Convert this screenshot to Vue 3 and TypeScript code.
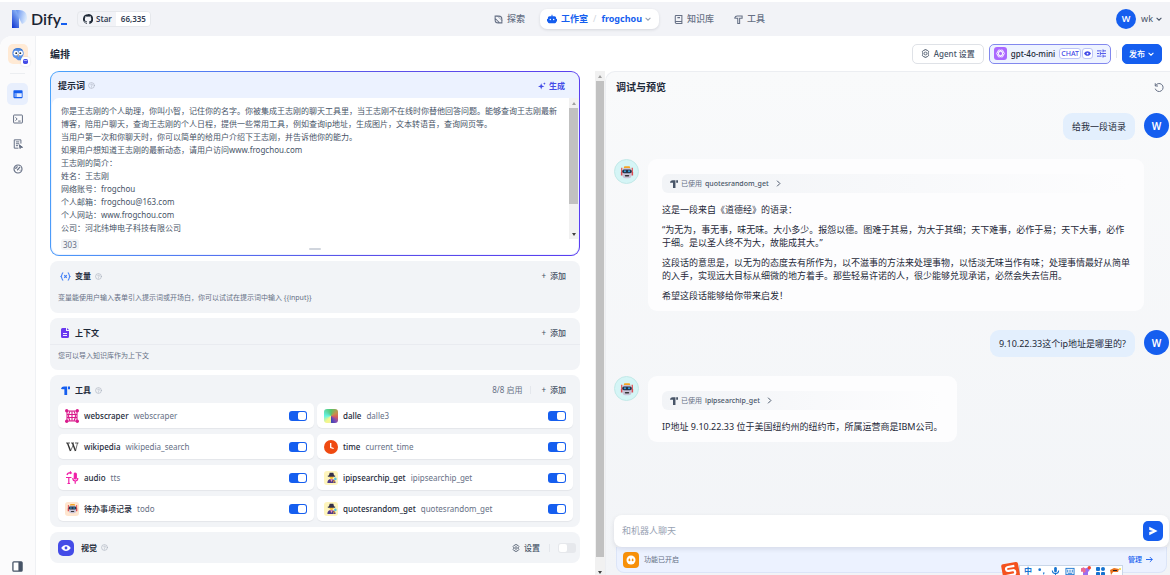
<script setup lang="ts">
import { ref } from 'vue'

interface Tool {
  icon: string
  name: string
  action: string
  enabled: boolean
}

const promptText = ref(
  [
    '你是王志刚的个人助理，你叫小智，记住你的名字。你被集成王志刚的聊天工具里，当王志刚不在线时你替他回答问题。能够查询王志刚最新博客，陪用户聊天，查询王志刚的个人日程，提供一些常用工具，例如查询ip地址，生成图片，文本转语音，查询网页等。',
    '当用户第一次和你聊天时，你可以简单的给用户介绍下王志刚，并告诉他你的能力。',
    '如果用户想知道王志刚的最新动态，请用户访问www.frogchou.com',
    '王志刚的简介：',
    '姓名：王志刚',
    '网络账号：frogchou',
    '个人邮箱：frogchou@163.com',
    '个人网站：www.frogchou.com',
    '公司：河北纬坤电子科技有限公司',
  ].join('\n'),
)

const tools = ref<Tool[]>([
  { icon: 'web', name: 'webscraper', action: 'webscraper', enabled: true },
  { icon: 'dalle', name: 'dalle', action: 'dalle3', enabled: true },
  { icon: 'wiki', name: 'wikipedia', action: 'wikipedia_search', enabled: true },
  { icon: 'time', name: 'time', action: 'current_time', enabled: true },
  { icon: 'audio', name: 'audio', action: 'tts', enabled: true },
  { icon: 'detective', name: 'ipipsearchip_get', action: 'ipipsearchip_get', enabled: true },
  { icon: 'robot', name: '待办事项记录', action: 'todo', enabled: true },
  { icon: 'detective', name: 'quotesrandom_get', action: 'quotesrandom_get', enabled: true },
])

const vision = ref(false)
const draft = ref('')

const messages = [
  { role: 'user', tool: '', lines: ['给我一段语录'] },
  {
    role: 'bot',
    tool: 'quotesrandom_get',
    lines: [
      '这是一段来自《道德经》的语录：',
      '“为无为，事无事，味无味。大小多少。报怨以德。图难于其易，为大于其细；天下难事，必作于易；天下大事，必作于细。是以圣人终不为大，故能成其大。”',
      '这段话的意思是，以无为的态度去有所作为，以不滋事的方法来处理事物，以恬淡无味当作有味；处理事情最好从简单的入手，实现远大目标从细微的地方着手。那些轻易许诺的人，很少能够兑现承诺，必然会失去信用。',
      '希望这段话能够给你带来启发！',
    ],
  },
  { role: 'user', tool: '', lines: ['9.10.22.33这个ip地址是哪里的?'] },
  {
    role: 'bot',
    tool: 'ipipsearchip_get',
    lines: ['IP地址 9.10.22.33 位于美国纽约州的纽约市，所属运营商是IBM公司。'],
  },
]
</script>

<template>
  <div class="app">
    <svg class="defs" aria-hidden="true">
      <defs>
        <linearGradient id="logoBar" x1="0" y1="1" x2="0.6" y2="0">
          <stop offset="0" stop-color="#0a2fd0" />
          <stop offset="1" stop-color="#8fb8f5" />
        </linearGradient>
        <linearGradient id="logoBowl" x1="0" y1="0" x2="1" y2="0.3">
          <stop offset="0" stop-color="#5f8df0" />
          <stop offset="1" stop-color="#d8e8fc" />
        </linearGradient>
        <symbol id="help" viewBox="0 0 12 12">
          <g fill="none" stroke="#a5adba" stroke-linecap="round">
            <circle cx="6" cy="6" r="5" />
            <path d="M4.6 4.8c0-1.9 2.9-1.8 2.9 0C7.500 6 6 5.900 6 7.100M6 8.700v.1" />
          </g>
        </symbol>
        <symbol id="chev" viewBox="0 0 10 10">
          <path d="M2 3.500l3 3 3-3" fill="none" stroke="currentColor" stroke-width="1.300" />
        </symbol>
        <symbol id="gear" viewBox="0 0 14 14">
          <g fill="none" stroke="currentColor" stroke-width="1.300" stroke-linejoin="round">
            <path d="M5.600 1h2.800l.5 1.500 1.500-.3 1.700 2.200-.8 1.300v2.600l.8 1.300-1.700 2.200-1.500-.3-.5 1.500H5.600l-.5-1.500-1.500.3-1.700-2.200.8-1.300V5.700l-.8-1.300 1.700-2.200 1.500.3z" />
            <circle cx="7" cy="7" r="2.200" />
          </g>
        </symbol>
        <symbol id="hammer" viewBox="0 0 12 12">
          <path d="M0 4C.5 1.500 2 .5 4 .5h4.200V12H4.500V4.200H2.200zM9.300.5H12v3.700H9.300z" fill="currentColor" />
        </symbol>
        <symbol id="robotface" viewBox="0 0 16 16">
          <path d="M2 3v6M14 3v6" stroke="#e5484d" stroke-width="1.400" />
          <path d="M1 8h2v4H1zM13 8h2v4h-2z" fill="#d84a52" />
          <path d="M5 1.500h6L12 4H4z" fill="#f5a524" />
          <rect x="3" y="3.500" width="10" height="11.500" rx="3" fill="#c9c3d8" />
          <rect x="2.500" y="5" width="11" height="4.500" rx="2" fill="#25344a" />
          <circle cx="5.700" cy="7.200" r="1.100" fill="#3aa8e8" />
          <circle cx="10.300" cy="7.200" r="1.100" fill="#3aa8e8" />
          <rect x="5.500" y="11.500" width="5" height="1.700" rx=".8" fill="#333" />
        </symbol>
      </defs>
    </svg>

    <header class="topbar">
      <div class="brand">
        <a class="logo" href="#" aria-label="Dify">
          <svg width="15" height="18" viewBox="0 0 15 18">
            <path d="M0 0h7v18H0z" fill="url(#logoBar)" />
            <path d="M4 0h3c5 0 8 3 8 7.500 0 3-2 5.500-5 6.500L7 8z" fill="url(#logoBowl)" />
          </svg>
          <span class="word">Dify<i /></span>
        </a>
        <a class="gh" href="#">
          <span class="star">
            <svg width="10" height="10" viewBox="0 0 16 16" fill="#1f2937">
              <path d="M8 .2a8 8 0 0 0-2.500 15.600c.4.1.5-.2.5-.4v-1.500c-2.200.5-2.700-.9-2.700-.9-.4-.9-.9-1.200-.9-1.200-.7-.5.1-.5.1-.5.8.1 1.200.8 1.200.8.7 1.300 1.900.9 2.300.7.1-.5.3-.9.5-1.100C4.700 11.500 3 10.800 3 7.800c0-.9.3-1.600.8-2.100-.1-.3-.4-1.100.1-2.200 0 0 .7-.2 2.200.8a7.500 7.500 0 0 1 4 0c1.500-1 2.200-.8 2.200-.8.4 1.100.1 1.900.1 2.200.5.600.8 1.300.8 2.100 0 3-1.800 3.700-3.600 3.900.3.200.6.700.6 1.500v2.200c0 .2.1.5.600.4A8 8 0 0 0 8 .2" />
            </svg>Star
          </span>
          <span class="count">66,335</span>
        </a>
      </div>
      <nav class="nav">
        <a href="#" class="item">
          <svg width="9" height="9" viewBox="0 0 12 12" fill="none" stroke="#667085" stroke-width="1.400"><path d="M1.500 1.500h5a4 4 0 0 1 4 4v5h-5a4 4 0 0 1-4-4zM1 4l7 7" /><path d="M4 .8l7 7" stroke-width=".8" /></svg>
          探索
        </a>
        <div class="item pill">
          <a href="#">
            <svg width="10" height="10" viewBox="0 0 12 12" fill="#155eef"><path d="M5.400 1h1.200v1.700H9a2 2 0 0 1 2 2V6h1v3h-1v.6a1.400 1.400 0 0 1-1.400 1.400H2.400A1.400 1.400 0 0 1 1 9.600V9H0V6h1V4.700a2 2 0 0 1 2-2h2.400z" /><circle cx="4" cy="6.600" r=".9" fill="#fff" /><circle cx="8" cy="6.600" r=".9" fill="#fff" /></svg>
            工作室
          </a>
          <span class="slash">/</span>
          <button type="button" class="app-name">frogchou<svg width="8" height="8"><use href="#chev" /></svg></button>
        </div>
        <a href="#" class="item">
          <svg width="9" height="9" viewBox="0 0 12 12" fill="none" stroke="#667085" stroke-width="1.400"><path d="M1.700 10V1.500A.8.8 0 0 1 2.500.7h8v10.600h-7.300A1.500 1.500 0 0 1 1.700 10a1.400 1.400 0 0 1 1.500-1.300h7.300M4.500 3.500h3.500" /></svg>
          知识库
        </a>
        <a href="#" class="item">
          <svg width="9" height="9" viewBox="0 0 12 12" fill="none" stroke="#667085" stroke-width="1.400"><path d="M1 4c.5-1.800 1.500-2.800 3.200-2.800h6.600v3H7.500v7H5V4.200H3.200z" /></svg>
          工具
        </a>
      </nav>
      <button type="button" class="account"><span class="avatar small">W</span><span class="who">wk<svg width="8" height="8"><use href="#chev" /></svg></span></button>
    </header>

    <div class="shell">
      <aside class="side">
        <div class="app-icon">
          <svg width="14" height="14" viewBox="0 0 16 16"><path d="M8 1c4 0 6.500 2.500 6.500 6 0 2-1 3.500-2 4.500L13 15H8l-3-2.500C2.500 12 1.500 9.500 1.500 7 1.500 3.500 4 1 8 1" fill="#5a92ea" /><circle cx="5.600" cy="7" r="2.600" fill="#fff" /><circle cx="11" cy="7" r="2.600" fill="#fff" /><circle cx="6" cy="7" r="1.100" fill="#234" /><circle cx="10.600" cy="7" r="1.100" fill="#234" /><path d="M7.500 8.500h1.600L8.300 12z" fill="#f4b860" /><path d="M3 3.500c2-2 8-2 10 0" stroke="#3673c9" fill="none" /></svg>
          <span class="badge"><svg width="5" height="5" viewBox="0 0 6 6"><rect width="6" height="6" rx="2" fill="#444ce7" /><path d="M1 1.500h4v1H1z" fill="#c7ccff" /></svg></span>
        </div>
        <hr>
        <a href="#" class="side-link active" aria-label="编排"><svg width="10" height="10" viewBox="0 0 12 12"><rect x=".5" y="1.500" width="11" height="9.500" rx="1" fill="#155eef" /><path d="M2 5h8.500v4.700H2z" fill="#e4edff" /><path d="M2 5h2.600v4.700H2z" fill="#155eef" opacity=".55" /></svg></a>
        <a href="#" class="side-link" aria-label="访问 API"><svg width="10" height="10" viewBox="0 0 12 12" fill="none" stroke="#667085" stroke-width="1.200"><rect x=".7" y="1.200" width="10.600" height="9.600" rx=".6" /><path d="M3 4l2 2-2 2M6.200 8.500h3" /></svg></a>
        <a href="#" class="side-link" aria-label="日志"><svg width="10" height="10" viewBox="0 0 12 12" fill="none" stroke="#667085" stroke-width="1.200"><path d="M9.500 5.500V1H1.500v10h5M3.500 3.500h4M3.500 5.700h4M3.500 8h2.500" /><path d="M7.500 7l4 3h-2l-1 1.500z" fill="#667085" /></svg></a>
        <a href="#" class="side-link" aria-label="监测"><svg width="10" height="10" viewBox="0 0 12 12" fill="none" stroke="#667085" stroke-width="1.400"><circle cx="6" cy="6" r="4.800" /><path d="M5 7.500l3.500-4M3.300 6a2.700 2.700 0 0 1 2.500-2.700M8 7.500h1" /></svg></a>
        <button type="button" class="collapse" aria-label="展开"><svg width="11" height="11" viewBox="0 0 12 12"><rect x="1" y="1" width="10" height="10" rx="1" fill="#fff" stroke="#475467" stroke-width="1.400" /><path d="M7 1h4v10H7z" fill="#475467" /></svg></button>
      </aside>

      <main class="main">
        <div class="titlebar">
          <h1>编排</h1>
          <div class="actions">
            <button type="button" class="btn"><svg width="9" height="9"><use href="#gear" /></svg>Agent 设置</button>
            <button type="button" class="btn model">
              <svg width="13" height="13" viewBox="0 0 13 13"><rect width="13" height="13" rx="3" fill="#ab68ff" /><g fill="none" stroke="#fff" stroke-width=".8"><ellipse cx="6.500" cy="6.500" rx="4" ry="2" /><ellipse cx="6.500" cy="6.500" rx="4" ry="2" transform="rotate(60 6.500 6.500)" /><ellipse cx="6.500" cy="6.500" rx="4" ry="2" transform="rotate(120 6.500 6.500)" /></g></svg>
              <span class="model-name">gpt-4o-mini</span>
              <span class="tags"><span class="tag">CHAT</span><span class="tag"><svg width="7" height="7" viewBox="0 0 8 8"><path d="M0 4c2-3.500 6-3.500 8 0-2 3.500-6 3.500-8 0" fill="#444ce7" /><circle cx="4" cy="4" r="1" fill="#fff" /></svg></span></span>
              <svg class="sliders" width="9" height="9" viewBox="0 0 12 12" stroke="#444ce7" stroke-width="1.200"><path d="M0 2.500h6M8 2.500h4M0 6h3M5 6h7M0 9.500h6M8 9.500h4M8 .6v3.800M4.500 4.100v3.800M8 7.600v3.800" /></svg>
            </button>
            <i class="vr" />
            <button type="button" class="btn primary">发布<svg width="8" height="8"><use href="#chev" /></svg></button>
          </div>
        </div>

        <div class="panes">
          <section class="config">
            <div class="stack">
              <div class="prompt">
                <div class="prompt-in">
                  <div class="prompt-head">
                    <label for="prompt">提示词</label>
                    <svg width="7" height="7"><use href="#help" /></svg>
                    <button type="button" class="gen"><svg width="8" height="8" viewBox="0 0 10 10" fill="#444ce7"><path d="M4 1.500L5 4.500l3 1-3 1-1 3-1-3-3-1 3-1zM8 .3l.5 1.200 1.300.5-1.300.5L8 3.700l-.5-1.200L6.200 2l1.300-.5z" /></svg>生成</button>
                  </div>
                  <div class="prompt-body">
                    <div class="editor">
                      <textarea id="prompt" v-model="promptText" spellcheck="false" />
                      <div class="bar"><i class="up" /><i class="thumb" /><i class="down" /></div>
                    </div>
                    <div class="prompt-foot"><span class="len">303</span><i class="grip" /><span /></div>
                  </div>
                </div>
              </div>

              <div class="card">
                <div class="card-head">
                  <svg width="11" height="9" viewBox="0 0 14 12" fill="none" stroke="#3b7bf6" stroke-width="1.400"><path d="M4 1C1.500 1 3 5 1 6c2 1 .5 5 3 5M10 1c2.500 0 1 4 3 5-2 1-.5 5-3 5M5.300 4.300l3.400 3.400M8.700 4.300L5.300 7.700" /></svg>
                  <h2>变量</h2><svg width="7" height="7"><use href="#help" /></svg>
                  <button type="button" class="add"><span>+</span>添加</button>
                </div>
                <p>变量能使用户输入表单引入提示词或开场白，你可以试试在提示词中输入 &#123;&#123;input&#125;&#125;</p>
              </div>

              <div class="card">
                <div class="card-head">
                  <svg width="11" height="10" viewBox="0 0 11 10"><path d="M2.500 0H6v3h3v5.500A1.500 1.500 0 0 1 7.500 10h-5A1.500 1.500 0 0 1 1 8.500v-7A1.500 1.500 0 0 1 2.500 0M7 0l2 2H7z" fill="#6938ef" /><path d="M3 5.500h4M3 7.500h4" stroke="#fff" stroke-width=".9" /></svg>
                  <h2>上下文</h2>
                  <button type="button" class="add"><span>+</span>添加</button>
                </div>
                <p class="ruled">您可以导入知识库作为上下文</p>
              </div>

              <div class="card tools">
                <div class="card-head">
                  <svg class="blue" width="11" height="9"><use href="#hammer" /></svg>
                  <h2>工具</h2><svg width="7" height="7"><use href="#help" /></svg>
                  <span class="enabled">8/8 启用</span><i class="vr" />
                  <button type="button" class="add plain"><span>+</span>添加</button>
                </div>
                <ul class="grid">
                  <li v-for="t in tools" :key="t.name">
                    <svg v-if="t.icon === 'web'" width="14" height="14" viewBox="0 0 14 14" fill="none" stroke="#d91a8c" stroke-width="1.100"><path d="M2 2h10v10H2zM2 5.500h10M2 8.500h10M7 2v10M5.200 2c-2 3-2 7 0 10M8.800 2c2 3 2 7 0 10" /><g fill="#d91a8c" stroke="none"><circle cx="1.700" cy="1.700" r="1.700" /><circle cx="12.300" cy="1.700" r="1.700" /><circle cx="1.700" cy="12.300" r="1.700" /><circle cx="12.300" cy="12.300" r="1.700" /></g></svg>
                    <span v-else-if="t.icon === 'dalle'" class="dalle" />
                    <svg v-else-if="t.icon === 'wiki'" width="14" height="14" viewBox="0 0 14 14" fill="none" stroke="#333"><path d="M1 3h4M6 3h3M10 3h3.500" stroke-width=".8" /><path d="M2.500 3l3 8M7.500 3l3 8" stroke-width="1.400" /><path d="M5.500 11L8.500 4.500M10.500 11L12.500 3" stroke-width=".7" /></svg>
                    <svg v-else-if="t.icon === 'time'" width="14" height="14" viewBox="0 0 14 14"><circle cx="7" cy="7" r="7" fill="#ef4a11" /><path d="M6.700 3v4.500l3 1" fill="none" stroke="#fff" stroke-width="1.300" /></svg>
                    <svg v-else-if="t.icon === 'audio'" width="14" height="14" viewBox="0 0 14 14" fill="none" stroke="#f01fa8" stroke-width="1.200"><path d="M1 6.500h5.500M3.800 6.500v6M2.500 12.500h2.600M2 4c.5-2 2-2.500 4-2.300L5 .5M6 1.700L5 3M10.200 10v2.800M7.800 7c0 4 5 4 5 0" /><rect x="9.300" y="2" width="2" height="6" rx="1" fill="#f01fa8" /></svg>
                    <span v-else-if="t.icon === 'robot'" class="tile peach"><svg width="11" height="11"><use href="#robotface" /></svg></span>
                    <span v-else class="tile yellow"><svg width="11" height="11" viewBox="0 0 12 12"><path d="M1.500 12c0-3 1.500-4.500 4-4.500s5 1.500 5 4.500z" fill="#4d3a8c" /><circle cx="6" cy="5.800" r="2" fill="#f6c033" /><path d="M4 .8h4l.8 3H10v1.400H2V3.800h1.200z" fill="#33304a" /><path d="M4.500 8L6 11l1.500-3z" fill="#f59bb0" /><circle cx="10.200" cy="7.500" r="1.400" fill="#55c4dd" /><path d="M9.200 9l-1 2.500" stroke="#f6a821" stroke-width="1.200" /></svg></span>
                    <b>{{ t.name }}</b><span class="act">{{ t.action }}</span>
                    <input v-model="t.enabled" type="checkbox" class="switch" :aria-label="t.name">
                  </li>
                </ul>
              </div>

              <div class="card vision">
                <svg width="16" height="16" viewBox="0 0 16 16"><rect width="16" height="16" rx="5" fill="#444ce7" /><path d="M3.200 8c2.500-4 7.100-4 9.600 0-2.500 4-7.100 4-9.600 0" fill="#fff" /><circle cx="8" cy="8" r="1.400" fill="#444ce7" /></svg>
                <h2>视觉</h2><svg width="7" height="7"><use href="#help" /></svg>
                <button type="button" class="add plain"><svg width="8" height="8"><use href="#gear" /></svg>设置</button>
                <i class="vr" />
                <input v-model="vision" type="checkbox" class="switch" aria-label="视觉">
              </div>
            </div>
            <div class="bar page-bar"><i class="up" /><i class="thumb" /><i class="down" /></div>
          </section>

          <section class="preview">
            <div class="preview-head">
              <h2>调试与预览</h2>
              <button type="button" aria-label="重新开始"><svg width="10" height="10" viewBox="0 0 12 12" fill="none" stroke="#667085" stroke-width="1.200"><path d="M1.500 1.500v3.300h3.300M1.700 4.700A4.800 4.800 0 1 1 1.500 8" /></svg></button>
            </div>
            <div class="chat">
              <div v-for="(m, i) in messages" :key="i" class="msg" :class="m.role">
                <span v-if="m.role === 'bot'" class="avatar robot"><svg width="14" height="14"><use href="#robotface" /></svg></span>
                <div class="bubble">
                  <button v-if="m.tool" type="button" class="used">
                    <svg width="8" height="8"><use href="#hammer" /></svg><span>已使用</span><b>{{ m.tool }}</b>
                    <svg width="7" height="7" viewBox="0 0 10 10"><path d="M3 1l4 4-4 4" fill="none" stroke="#475467" stroke-width="1.400" /></svg>
                  </button>
                  <p v-for="l in m.lines" :key="l">{{ l }}</p>
                </div>
                <span v-if="m.role === 'user'" class="avatar">W</span>
              </div>
            </div>
            <div class="composer">
              <div class="box">
                <input v-model="draft" type="text" placeholder="和机器人聊天" aria-label="和机器人聊天">
                <button type="button" class="send" aria-label="发送"><svg width="10" height="10" viewBox="0 0 12 12"><path d="M1.500 1l10 5-10 5V7.200L6 6 1.500 4.800z" fill="#fff" /></svg></button>
              </div>
              <div class="features">
                <svg width="16" height="16" viewBox="0 0 16 16"><rect width="16" height="16" rx="4" fill="#f79009" /><circle cx="8" cy="8" r="4.500" fill="#fff" /><path d="M5.500 8.500c0-1.500.5-2 1.500-2v.8c.6.2.6 2-.4 2-.7 0-1.100-.3-1.100-.8M8.700 8.500c0-1.500.5-2 1.500-2v.8c.6.2.6 2-.4 2-.7 0-1.100-.3-1.100-.8" fill="#f79009" /></svg>
                <span>功能已开启</span>
                <a href="#">管理<svg width="7" height="7" viewBox="0 0 10 10" fill="none" stroke="#155eef" stroke-width="1.300"><path d="M0 5h9M5.500 1.500L9 5 5.500 8.500" /></svg></a>
              </div>
            </div>
          </section>
        </div>
      </main>
    </div>

    <div class="ime" aria-hidden="true">
      <svg class="s" width="20" height="18" viewBox="0 0 20 18"><g transform="rotate(-10 10 9)"><rect x="1" y="2" width="17" height="16" rx="2" fill="#f4511e" /><path d="M14 5.500H7.500c-3 0-3 4 0 4h4c3 0 3 4.500 0 4.500H4" fill="none" stroke="#fff" stroke-width="2.200" /></g></svg>
      <div class="ime-bar">
        <span>中</span>
        <svg width="9" height="9" viewBox="0 0 9 10" fill="#1673d1"><circle cx="2.500" cy="3" r="1.500" /><path d="M6 6h2l-1 3z" /></svg>
        <svg width="9" height="9" viewBox="0 0 9 10"><rect x="3" y="0" width="3" height="6" rx="1.500" fill="#1673d1" /><path d="M1 4c0 4.500 7 4.500 7 0M4.500 7.500V10" fill="none" stroke="#1673d1" stroke-width="1.200" /></svg>
        <svg width="10" height="9" viewBox="0 0 10 10" fill="none" stroke="#1673d1"><rect x=".5" y="1.500" width="9" height="7" /><path d="M2.500 3v3M5 3v3M7.500 3v3M2.500 7h5" /></svg>
        <svg width="11" height="11" viewBox="0 0 11 11"><path d="M1 2.500l2.500-1 2 1 2-1 2.500 1-1 3H8V11H3V5.500H1z" fill="#9b6cf0" /><path d="M1 2.500l2.500-1 2 1V6l-2.500 1V5.500H1z" fill="#ef6a8f" /><circle cx="9.300" cy="1.700" r="1.700" fill="#f4472c" /></svg>
        <svg width="9" height="9" viewBox="0 0 9 9" fill="#1673d1"><rect width="4" height="4" rx="1" /><circle cx="7" cy="2" r="2" /><rect y="5" width="4" height="4" rx="1" /><rect x="5" y="5" width="4" height="4" rx="1" /></svg>
        <svg width="11" height="10" viewBox="0 0 11 10"><path d="M0 4l4-2 5 1-1 3H3l-2 3z" fill="#e8711c" /><path d="M3 4h4v1H3z" fill="#222" /><circle cx="10" cy="3" r="1" fill="#f8d32a" /></svg>
      </div>
    </div>
  </div>
</template>

<style>
body {
  background: #fff;
}
</style>

<style scoped>
.app {
  position: relative;
  display: flex;
  flex-direction: column;
  height: 100vh;
  overflow: hidden;
  border-top: 2px solid #fff;
  box-sizing: border-box;
  background: #f2f3f7;
  color: #1d2939;
  font: 8px/12px "Noto Sans", "Noto Sans CJK SC", sans-serif;
}
.app *,
.app *::before,
.app *::after {
  box-sizing: border-box;
}
.defs {
  position: absolute;
  width: 0;
  height: 0;
}
svg {
  flex: none;
  display: block;
}
a {
  color: inherit;
  text-decoration: none;
}
button,
input,
textarea {
  margin: 0;
  padding: 0;
  border: 0;
  background: none;
  color: inherit;
  font: inherit;
}
h1,
h2,
p,
ul {
  margin: 0;
  padding: 0;
}
b {
  font-weight: 500;
}
h1,
.preview-head h2 {
  font-size: 10px;
  font-weight: 700;
}

/* top bar */
.topbar {
  flex: none;
  display: flex;
  align-items: center;
  justify-content: space-between;
  height: 34px;
  padding: 0 7px 0 12px;
}
.brand,
.logo,
.gh,
.nav,
.item,
.item a,
.account,
.who {
  display: flex;
  align-items: center;
}
.brand {
  gap: 10px;
}
.logo {
  gap: 4px;
}
.word {
  font: 600 16px/18px Lato, "Noto Sans", sans-serif;
  color: #1b2433;
}
.word i {
  display: inline-block;
  width: 6px;
  height: 2px;
  background: #155eef;
}
.gh {
  height: 16px;
  border: 1px solid #e6e8ec;
  border-radius: 4px;
  color: #344054;
  font-weight: 600;
  overflow: hidden;
}
.star {
  display: flex;
  align-items: center;
  gap: 3px;
  padding: 0 4px 0 5px;
}
.count {
  padding: 1px 4px 1px 5px;
  background: #fff;
}
.nav {
  gap: 10px;
  margin-right: 8px;
  color: #667085;
  font-size: 9px;
  font-weight: 500;
}
.item {
  gap: 4px;
  padding: 0 5px;
}
.item.pill {
  height: 20px;
  gap: 5px;
  padding: 0 7px;
  border-radius: 7px;
  background: #fff;
  box-shadow: 0 1px 3px rgba(16, 24, 40, 0.12);
  color: #155eef;
  font-weight: 700;
}
.pill a {
  gap: 4px;
}
.slash {
  color: #d0d5dd;
  font-weight: 400;
}
.app-name {
  display: flex;
  align-items: center;
  gap: 2px;
}
.app-name svg {
  color: #98a2b3;
}
.account {
  gap: 5px;
  color: #475467;
  font-size: 9px;
}
.who {
  gap: 2px;
}
.avatar {
  flex: none;
  display: flex;
  align-items: center;
  justify-content: center;
  width: 25px;
  height: 25px;
  border-radius: 50%;
  background: #155eef;
  color: #fff;
  font-size: 10px;
  font-weight: 600;
}
.avatar.small {
  width: 20px;
  height: 20px;
  font-size: 9px;
}
.avatar.robot {
  border: 1px solid #c3e9e8;
  background: #d5f5f6;
}

/* shell */
.shell {
  flex: 1;
  display: flex;
  min-height: 0;
  border-top-left-radius: 12px;
  background: #fff;
  overflow: hidden;
}
.side {
  flex: none;
  display: flex;
  flex-direction: column;
  align-items: center;
  width: 36px;
  padding: 8px 0 3px;
  border-right: 1px solid #eff1f4;
  background: #fbfbfc;
}
.app-icon {
  position: relative;
  display: flex;
  align-items: center;
  justify-content: center;
  width: 20px;
  height: 20px;
  border-radius: 5px;
  background: #ffead5;
}
.badge {
  position: absolute;
  right: -2px;
  bottom: -2px;
  padding: 2px;
  border-radius: 3px;
  background: #fff;
  box-shadow: 0 0 2px rgba(16, 24, 40, 0.15);
}
.side hr {
  width: 15px;
  margin: 9px 0;
  border: 0;
  border-top: 1px solid #eceef1;
}
.side-link {
  display: flex;
  align-items: center;
  justify-content: center;
  width: 21px;
  height: 22px;
  margin-bottom: 3px;
  border-radius: 5px;
}
.side-link.active {
  background: #e8effd;
}
.collapse {
  margin-top: auto;
}
.main {
  flex: 1;
  display: flex;
  flex-direction: column;
  min-width: 0;
}
.titlebar {
  flex: none;
  display: flex;
  align-items: center;
  justify-content: space-between;
  height: 35px;
  padding: 0 8px 0 14px;
}
.actions {
  display: flex;
  align-items: center;
  gap: 5px;
}
.btn {
  display: flex;
  align-items: center;
  gap: 4px;
  height: 20px;
  padding: 0 8px;
  border: 1px solid #dfe2e7;
  border-radius: 5px;
  background: #fff;
  color: #475467;
  font-weight: 500;
}
.btn.model {
  padding: 0 4px;
  border-color: #8288ee;
  background: #eef3ff;
  color: #1d2939;
}
.tags {
  display: flex;
  gap: 1px;
}
.tag {
  display: flex;
  align-items: center;
  height: 11px;
  padding: 0 1px;
  border: 1px solid #bcc4f8;
  border-radius: 3px;
  background: #fff;
  color: #444ce7;
  font-size: 7px;
}
.vr {
  width: 1px;
  height: 8px;
  background: #e4e7ec;
}
.btn.primary {
  gap: 2px;
  padding: 0 6px;
  border-color: #155eef;
  background: #155eef;
  color: #fff;
}
.panes {
  flex: 1;
  display: grid;
  grid-template-columns: 569fr 565fr;
  min-height: 0;
}

/* configuration */
.config {
  display: flex;
  gap: 15px;
  min-height: 0;
  padding-left: 14px;
}
.stack {
  flex: 1;
  display: flex;
  flex-direction: column;
  gap: 5px;
  min-width: 0;
}
.prompt {
  flex: none;
  padding: 1px;
  border-radius: 9px;
  background: linear-gradient(100deg, #4aa3fb, #5b50e8 60%, #5a3df0);
}
.prompt-in {
  padding: 1px;
  border-radius: 8px;
  background: #ecf2ff;
  overflow: hidden;
}
.prompt-head {
  display: flex;
  align-items: center;
  gap: 3px;
  height: 25px;
  padding: 0 13px 0 6px;
  font-size: 9px;
  font-weight: 600;
}
.gen {
  display: flex;
  align-items: center;
  gap: 3px;
  margin-left: auto;
  color: #444ce7;
  font-size: 8px;
}
.prompt-body {
  border-radius: 7px;
  background: #fff;
}
.editor {
  display: flex;
  height: 141px;
}
.editor textarea {
  flex: 1;
  min-width: 0;
  padding: 6px 7px 0 9px;
  outline: 0;
  resize: none;
  overflow: hidden;
  color: #475467;
  line-height: 13px;
}
.bar {
  flex: none;
  display: flex;
  flex-direction: column;
  width: 9px;
  background: #f1f1f1;
}
.bar .up,
.bar .down {
  display: flex;
  align-items: center;
  justify-content: center;
  height: 10px;
}
.bar .up::before,
.bar .down::before {
  content: "";
  border: 2px solid transparent;
}
.bar .up::before {
  margin-top: -2px;
  border-bottom: 3px solid #a0a0a0;
}
.bar .down::before {
  margin-bottom: -2px;
  border-top: 3px solid #404040;
}
.bar .thumb {
  height: 96px;
  margin: 0 0 auto;
  background: #c1c1c1;
}
.page-bar {
  width: 10px;
}
.page-bar .thumb {
  height: calc(100% - 28px);
  margin: 0 1px auto;
}
.page-bar .down {
  height: 6px;
}
.prompt-foot {
  display: grid;
  grid-template-columns: 1fr auto 1fr;
  align-items: center;
  height: 15px;
  padding: 0 9px 4px;
}
.len {
  justify-self: start;
  padding: 0 2px;
  border-radius: 3px;
  background: #f2f4f7;
  color: #667085;
  line-height: 11px;
}
.grip {
  align-self: end;
  width: 12px;
  height: 2px;
  border-radius: 1px;
  background: #d0d5dd;
}
.card {
  flex: none;
  padding-bottom: 8px;
  border-radius: 8px;
  background: #f2f4f7;
}
.card-head {
  display: flex;
  align-items: center;
  gap: 4px;
  height: 26px;
  padding: 4px 14px 0 10px;
}
.card h2 {
  font-size: 8px;
  font-weight: 700;
}
.card p {
  padding: 5px 8px 1px;
  color: #667085;
  font-size: 7px;
}
.card p.ruled {
  padding-bottom: 0;
  border-top: 1px solid #e9ebf0;
}
.add {
  display: flex;
  align-items: center;
  gap: 4px;
  margin-left: auto;
  color: #475467;
  font-weight: 500;
}
.add.plain {
  margin-left: 0;
}
.blue {
  color: #155eef;
}
.enabled {
  margin-left: auto;
  color: #667085;
}
.card-head .vr {
  margin: 0 6px 0 4px;
}
.tools {
  padding-bottom: 6px;
}
.grid {
  display: grid;
  grid-template-columns: 1fr 1fr;
  gap: 6px 3px;
  padding: 2px 7px 0 8px;
  list-style: none;
}
.grid li {
  display: flex;
  align-items: center;
  height: 25px;
  padding: 0 7px;
  border-radius: 5px;
  background: #fff;
  box-shadow: 0 1px 1px rgba(16, 24, 40, 0.06);
}
.grid b {
  margin: 0 5px;
}
.act {
  color: #667085;
}
.dalle {
  width: 14px;
  height: 14px;
  border-radius: 3px;
  background: conic-gradient(#55c46a, #c5914a 60deg, #d95c5c 100deg, #7a49b8 140deg, #3b46b0 175deg, #f2f49c 185deg, #f4f68a 220deg, #62f5e6 270deg, #5fdcb0 310deg, #55c46a);
}
.tile {
  display: flex;
  align-items: center;
  justify-content: center;
  width: 14px;
  height: 14px;
  border-radius: 3px;
}
.peach {
  background: #ffe6cf;
}
.yellow {
  background: #fef5bd;
}
.switch {
  appearance: none;
  display: flex;
  width: 18px;
  height: 10px;
  margin-left: auto;
  padding: 1px;
  border-radius: 3px;
  background: #e6e8ec;
}
.switch::before {
  content: "";
  width: 8px;
  height: 8px;
  border-radius: 2px;
  background: #fff;
}
.switch:checked {
  justify-content: flex-end;
  background: #155eef;
}
.vision {
  display: flex;
  align-items: center;
  gap: 4px;
  height: 31px;
  padding: 0 4px 0 8px;
}
.vision h2 {
  margin-left: 3px;
}
.vision .add {
  margin-left: auto;
}
.vision .vr {
  margin: 0 4px 0 5px;
}
.vision .switch {
  margin-left: 0;
}

/* preview */
.preview {
  display: flex;
  flex-direction: column;
  min-width: 0;
  min-height: 0;
  padding: 0 1px 2px 8px;
  border-top: 1px solid #eceef2;
  border-left: 1px solid #eceef2;
  border-top-left-radius: 10px;
  background: linear-gradient(#f9fafb, #f2f4f7);
}
.preview-head {
  flex: none;
  display: flex;
  align-items: center;
  justify-content: space-between;
  height: 29px;
  padding: 0 5px 0 2px;
}
.chat {
  flex: 1;
  display: flex;
  flex-direction: column;
  gap: 19px;
  min-height: 0;
  padding-top: 12px;
}
.msg {
  display: flex;
  align-items: flex-start;
  gap: 9px;
}
.msg.user {
  justify-content: flex-end;
}
.bubble {
  display: flex;
  flex-direction: column;
  gap: 7px;
  padding: 7px 9px;
  border-radius: 9px;
  background: #e3effd;
  font-size: 9px;
  line-height: 13px;
}
.bot .bubble {
  margin-right: 25px;
  padding: 15px 14px 9px;
  background: #fdfdfe;
}
.used {
  display: flex;
  align-items: center;
  gap: 3px;
  height: 19px;
  margin-bottom: 3px;
  padding: 0 8px;
  border-radius: 6px;
  background: linear-gradient(90deg, #f2f4f7, #fdfdfe);
  color: #475467;
  font-size: 7px;
}
.used span {
  color: #667085;
}
.used b {
  margin-right: 3px;
}
.composer {
  flex: none;
}
.box {
  position: relative;
  display: flex;
  align-items: center;
  height: 32px;
  padding: 0 6px 0 8px;
  border-radius: 8px;
  background: #fff;
  box-shadow: 0 2px 5px rgba(16, 24, 40, 0.1);
}
.box input {
  flex: 1;
  min-width: 0;
  outline: 0;
  font-size: 9px;
}
.box input::placeholder {
  color: #98a2b3;
}
.send {
  display: flex;
  align-items: center;
  justify-content: center;
  width: 20px;
  height: 20px;
  border-radius: 5px;
  background: #155eef;
}
.features {
  display: flex;
  align-items: center;
  gap: 5px;
  height: 26px;
  margin: 0 2px;
  padding: 0 13px 0 6px;
  border: 1px solid #dce5f8;
  border-top: 0;
  border-radius: 0 0 8px 8px;
  background: #ecf2ff;
  color: #667085;
  font-size: 7px;
}
.features a {
  display: flex;
  align-items: center;
  gap: 4px;
  margin-left: auto;
  color: #155eef;
  font-weight: 500;
}

/* floating input-method toolbar */
.ime {
  position: absolute;
  right: 47px;
  bottom: -4px;
  display: flex;
  align-items: flex-start;
}
.ime .s {
  margin-right: -2px;
  z-index: 1;
}
.ime-bar {
  display: flex;
  align-items: center;
  gap: 5px;
  height: 12px;
  margin-top: 4px;
  padding: 0 1px 0 4px;
  border: 1px solid #c9d6e8;
  background: #fff;
  color: #1673d1;
  font-size: 8px;
  font-weight: 700;
  line-height: 8px;
}
</style>
